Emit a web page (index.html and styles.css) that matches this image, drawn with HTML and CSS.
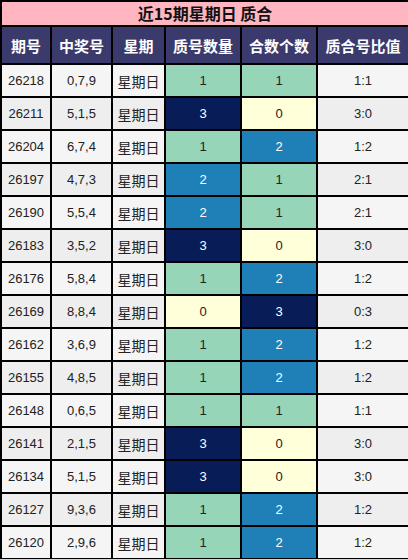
FILE: index.html
```html
<!DOCTYPE html>
<html>
<head>
<meta charset="utf-8">
<link rel="stylesheet" href="styles.css">
</head>
<body>
<table class="tbl">
<colgroup>
<col class="c1"><col class="c2"><col class="c3"><col class="c4"><col class="c5"><col class="c6">
</colgroup>
<thead>
<tr class="title"><th colspan="6">近15期星期日 质合</th></tr>
<tr class="head"><th>期号</th><th>中奖号</th><th>星期</th><th>质号数量</th><th>合数个数</th><th>质合号比值</th></tr>
</thead>
<tbody>
<tr><td>26218</td><td>0,7,9</td><td class="wk">星期日</td><td class="v1">1</td><td class="v1">1</td><td>1:1</td></tr>
<tr><td>26211</td><td>5,1,5</td><td class="wk">星期日</td><td class="v3">3</td><td class="v0">0</td><td>3:0</td></tr>
<tr><td>26204</td><td>6,7,4</td><td class="wk">星期日</td><td class="v1">1</td><td class="v2">2</td><td>1:2</td></tr>
<tr><td>26197</td><td>4,7,3</td><td class="wk">星期日</td><td class="v2">2</td><td class="v1">1</td><td>2:1</td></tr>
<tr><td>26190</td><td>5,5,4</td><td class="wk">星期日</td><td class="v2">2</td><td class="v1">1</td><td>2:1</td></tr>
<tr><td>26183</td><td>3,5,2</td><td class="wk">星期日</td><td class="v3">3</td><td class="v0">0</td><td>3:0</td></tr>
<tr><td>26176</td><td>5,8,4</td><td class="wk">星期日</td><td class="v1">1</td><td class="v2">2</td><td>1:2</td></tr>
<tr><td>26169</td><td>8,8,4</td><td class="wk">星期日</td><td class="v0">0</td><td class="v3">3</td><td>0:3</td></tr>
<tr><td>26162</td><td>3,6,9</td><td class="wk">星期日</td><td class="v1">1</td><td class="v2">2</td><td>1:2</td></tr>
<tr><td>26155</td><td>4,8,5</td><td class="wk">星期日</td><td class="v1">1</td><td class="v2">2</td><td>1:2</td></tr>
<tr><td>26148</td><td>0,6,5</td><td class="wk">星期日</td><td class="v1">1</td><td class="v1">1</td><td>1:1</td></tr>
<tr><td>26141</td><td>2,1,5</td><td class="wk">星期日</td><td class="v3">3</td><td class="v0">0</td><td>3:0</td></tr>
<tr><td>26134</td><td>5,1,5</td><td class="wk">星期日</td><td class="v3">3</td><td class="v0">0</td><td>3:0</td></tr>
<tr><td>26127</td><td>9,3,6</td><td class="wk">星期日</td><td class="v1">1</td><td class="v2">2</td><td>1:2</td></tr>
<tr><td>26120</td><td>2,9,6</td><td class="wk">星期日</td><td class="v1">1</td><td class="v2">2</td><td>1:2</td></tr>
</tbody>
</table>
</body>
</html>
```
FILE: styles.css
```css
html, body {
  margin: 0;
  padding: 0;
  background: #ffffff;
}
.tbl {
  border-collapse: collapse;
  width: 408px;
  table-layout: fixed;
  font-family: "Liberation Sans", "Noto Sans CJK SC", sans-serif;
  font-size: 13px;
  color: #222222;
}
.c1 { width: 50px; }
.c2 { width: 61px; }
.c3 { width: 53px; }
.c4 { width: 76px; }
.c5 { width: 76px; }
.c6 { width: 92px; }
.tbl th, .tbl td {
  border: 2px solid #000000;
  padding: 0;
  text-align: center;
  vertical-align: middle;
}
.title th {
  background: #ffb6c1;
  height: 23px;
  font-family: "Noto Sans CJK SC", sans-serif;
  font-size: 16px;
  font-weight: bold;
  color: #111111;
  line-height: 23px;
}
.head th {
  background: #3b3a6c;
  color: #ffffff;
  height: 36px;
  font-family: "Noto Sans CJK SC", sans-serif;
  font-size: 15px;
  font-weight: bold;
}
.tbl td {
  height: 31px;
  background: #f5f5f5;
}
.tbl tbody tr:nth-child(even) td {
  background: #eeeeee;
}
.tbl td.wk {
  font-family: "Noto Sans CJK SC", sans-serif;
  font-size: 14px;
}
.tbl tbody tr td.v0 { background: #ffffd9; color: #222222; }
.tbl tbody tr td.v1 { background: #97d5b9; color: #222222; }
.tbl tbody tr td.v2 { background: #1f80b8; color: #ffffff; }
.tbl tbody tr td.v3 { background: #081d58; color: #ffffff; }
```
